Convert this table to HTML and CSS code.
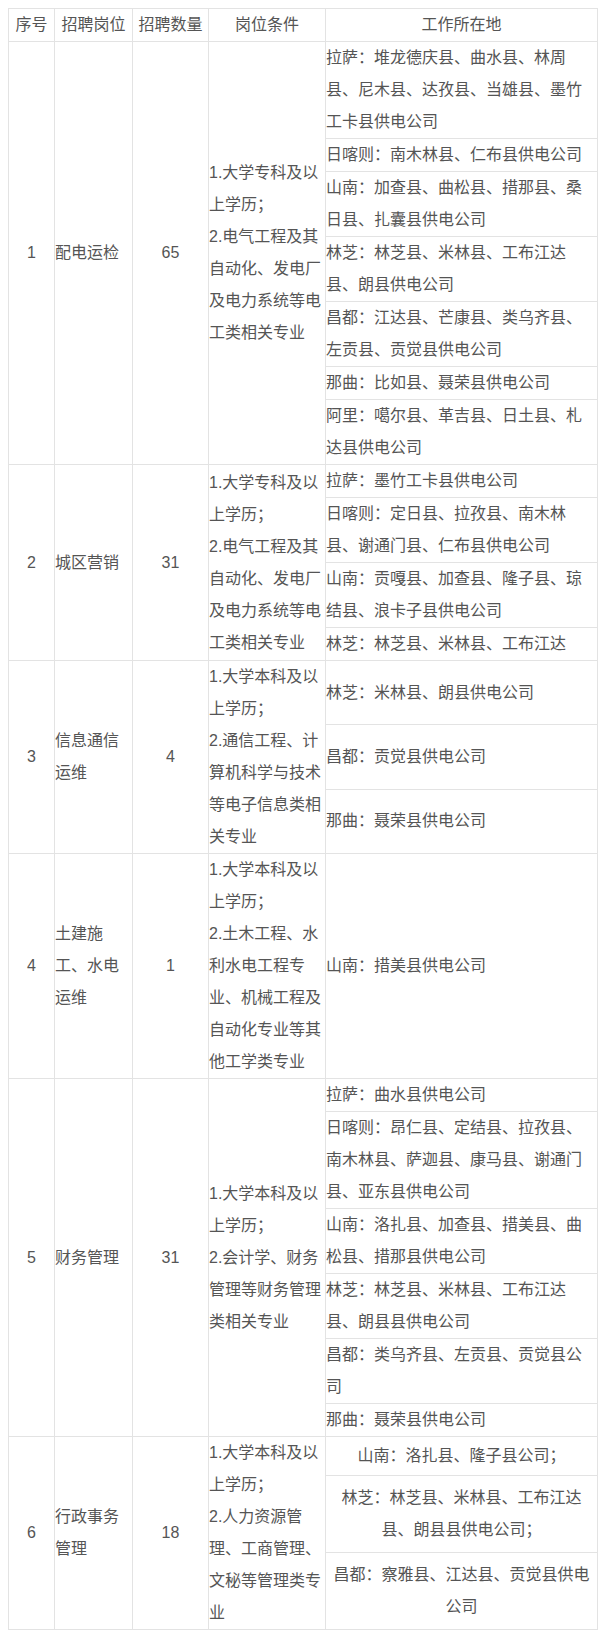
FILE: index.html
```html
<!DOCTYPE html>
<html lang="zh-CN">
<head>
<meta charset="utf-8">
<title>招聘岗位</title>
<link rel="stylesheet" href="styles.css">
</head>
<body>
<table class="jobs">
  <colgroup>
    <col class="c-no"><col class="c-post"><col class="c-num"><col class="c-req"><col class="c-loc">
  </colgroup>
  <thead>
    <tr><th>序号</th><th>招聘岗位</th><th>招聘数量</th><th>岗位条件</th><th>工作所在地</th></tr>
  </thead>
  <tbody>
    <tr>
      <td rowspan="7" class="no">1</td>
      <td rowspan="7" class="post">配电运检</td>
      <td rowspan="7" class="num">65</td>
      <td rowspan="7" class="req">1.大学专科及以上学历；<br>2.电气工程及其自动化、发电厂及电力系统等电工类相关专业</td>
      <td class="loc">拉萨：堆龙德庆县、曲水县、林周县、尼木县、达孜县、当雄县、墨竹工卡县供电公司</td>
    </tr>
    <tr><td class="loc">日喀则：南木林县、仁布县供电公司</td></tr>
    <tr><td class="loc">山南：加查县、曲松县、措那县、桑日县、扎囊县供电公司</td></tr>
    <tr><td class="loc">林芝：林芝县、米林县、工布江达县、朗县供电公司</td></tr>
    <tr><td class="loc">昌都：江达县、芒康县、类乌齐县、左贡县、贡觉县供电公司</td></tr>
    <tr><td class="loc">那曲：比如县、聂荣县供电公司</td></tr>
    <tr><td class="loc">阿里：噶尔县、革吉县、日土县、札达县供电公司</td></tr>

    <tr>
      <td rowspan="4" class="no">2</td>
      <td rowspan="4" class="post">城区营销</td>
      <td rowspan="4" class="num">31</td>
      <td rowspan="4" class="req">1.大学专科及以上学历；<br>2.电气工程及其自动化、发电厂及电力系统等电工类相关专业</td>
      <td class="loc">拉萨：墨竹工卡县供电公司</td>
    </tr>
    <tr><td class="loc">日喀则：定日县、拉孜县、南木林县、谢通门县、仁布县供电公司</td></tr>
    <tr><td class="loc">山南：贡嘎县、加查县、隆子县、琼结县、浪卡子县供电公司</td></tr>
    <tr><td class="loc">林芝：林芝县、米林县、工布江达</td></tr>

    <tr>
      <td rowspan="3" class="no">3</td>
      <td rowspan="3" class="post">信息通信运维</td>
      <td rowspan="3" class="num">4</td>
      <td rowspan="3" class="req">1.大学本科及以上学历；<br>2.通信工程、计算机科学与技术等电子信息类相关专业</td>
      <td class="loc">林芝：米林县、朗县供电公司</td>
    </tr>
    <tr><td class="loc">昌都：贡觉县供电公司</td></tr>
    <tr><td class="loc">那曲：聂荣县供电公司</td></tr>

    <tr>
      <td class="no">4</td>
      <td class="post">土建施工、水电运维</td>
      <td class="num">1</td>
      <td class="req">1.大学本科及以上学历；<br>2.土木工程、水利水电工程专业、机械工程及自动化专业等其他工学类专业</td>
      <td class="loc">山南：措美县供电公司</td>
    </tr>

    <tr>
      <td rowspan="6" class="no">5</td>
      <td rowspan="6" class="post">财务管理</td>
      <td rowspan="6" class="num">31</td>
      <td rowspan="6" class="req">1.大学本科及以上学历；<br>2.会计学、财务管理等财务管理类相关专业</td>
      <td class="loc">拉萨：曲水县供电公司</td>
    </tr>
    <tr><td class="loc">日喀则：昂仁县、定结县、拉孜县、南木林县、萨迦县、康马县、谢通门县、亚东县供电公司</td></tr>
    <tr><td class="loc">山南：洛扎县、加查县、措美县、曲松县、措那县供电公司</td></tr>
    <tr><td class="loc">林芝：林芝县、米林县、工布江达县、朗县县供电公司</td></tr>
    <tr><td class="loc">昌都：类乌齐县、左贡县、贡觉县公司</td></tr>
    <tr><td class="loc">那曲：聂荣县供电公司</td></tr>

    <tr>
      <td rowspan="3" class="no">6</td>
      <td rowspan="3" class="post">行政事务管理</td>
      <td rowspan="3" class="num">18</td>
      <td rowspan="3" class="req">1.大学本科及以上学历；<br>2.人力资源管理、工商管理、文秘等管理类专业</td>
      <td class="loc loc-center">山南：洛扎县、隆子县公司；</td>
    </tr>
    <tr><td class="loc loc-center">林芝：林芝县、米林县、工布江达县、朗县县供电公司；</td></tr>
    <tr><td class="loc loc-center">昌都：察雅县、江达县、贡觉县供电公司</td></tr>
  </tbody>
</table>
</body>
</html>
```

FILE: styles.css
```css
html, body {
  background: #ffffff;
}

body {
  margin: 8px;
  font-family: "Liberation Sans", "Noto Sans CJK SC", sans-serif;
  font-size: 16px;
  color: #555555;
}

.jobs {
  border-collapse: collapse;
  table-layout: fixed;
  width: 589px;
  text-spacing-trim: space-all;
}

.c-no { width: 46px; }
.c-post { width: 78px; }
.c-num { width: 76px; }
.c-req { width: 117px; }
.c-loc { width: 272px; }

.jobs th,
.jobs td {
  border: 1px solid #e3e3e3;
  padding: 0;
  line-height: 32px;
  font-weight: normal;
  vertical-align: middle;
  text-align: left;
  text-spacing-trim: space-all;
}

.jobs th {
  text-align: center;
}

.jobs .no,
.jobs .num {
  text-align: center;
}

.jobs .loc-center {
  text-align: center;
}
```
